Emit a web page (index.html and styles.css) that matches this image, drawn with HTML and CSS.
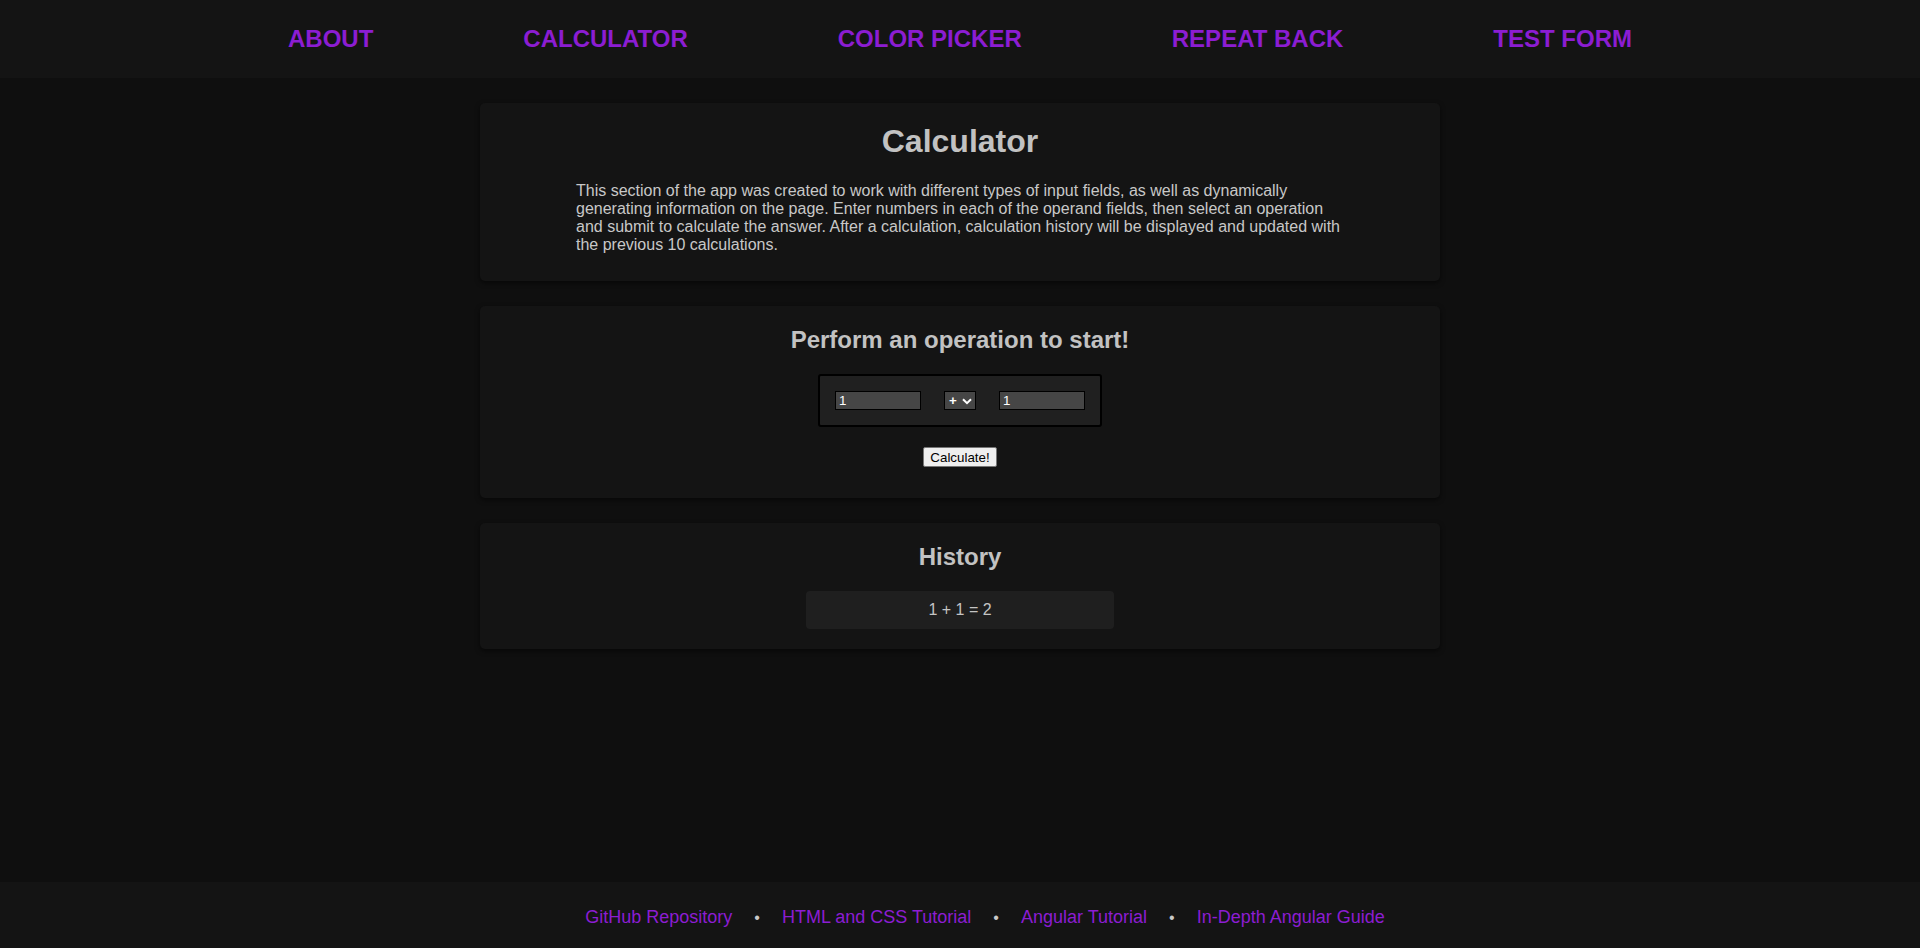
FILE: index.html
```html
<!DOCTYPE html>
<html lang="en">
<head>
<meta charset="utf-8">
<title>Calculator</title>
<link rel="stylesheet" href="styles.css">
</head>
<body>
<header class="site-header">
  <nav class="nav">
    <a class="nav-link" href="#">ABOUT</a>
    <a class="nav-link" href="#">CALCULATOR</a>
    <a class="nav-link" href="#">COLOR PICKER</a>
    <a class="nav-link" href="#">REPEAT BACK</a>
    <a class="nav-link" href="#">TEST FORM</a>
  </nav>
</header>
<main class="main">
  <section class="card card-intro">
    <h1 class="card-title">Calculator</h1>
    <p class="intro-text">This section of the app was created to work with different types of input fields, as well as dynamically generating information on the page. Enter numbers in each of the operand fields, then select an operation and submit to calculate the answer. After a calculation, calculation history will be displayed and updated with the previous 10 calculations.</p>
  </section>
  <section class="card card-form">
    <h2 class="card-subtitle">Perform an operation to start!</h2>
    <div class="operation-box">
      <input class="operand" type="text" value="1">
      <select class="operator">
        <option>+</option>
        <option>-</option>
        <option>*</option>
        <option>/</option>
      </select>
      <input class="operand" type="text" value="1">
    </div>
    <button class="calc-button" type="button">Calculate!</button>
  </section>
  <section class="card card-history">
    <h2 class="card-subtitle">History</h2>
    <div class="history-item">1 + 1 = 2</div>
  </section>
</main>
<footer class="site-footer">
  <a class="footer-link" href="#">GitHub Repository</a>
  <span class="footer-sep">•</span>
  <a class="footer-link" href="#">HTML and CSS Tutorial</a>
  <span class="footer-sep">•</span>
  <a class="footer-link" href="#">Angular Tutorial</a>
  <span class="footer-sep">•</span>
  <a class="footer-link" href="#">In-Depth Angular Guide</a>
</footer>
</body>
</html>
```
FILE: styles.css
```css
* {
  box-sizing: border-box;
}

html, body {
  margin: 0;
  padding: 0;
}

body {
  min-height: 100vh;
  display: flex;
  flex-direction: column;
  background: #0f0f0f;
  font-family: "Liberation Sans", Arial, sans-serif;
  color: #c4c4c4;
}

.site-header {
  height: 78px;
  background: #141414;
  flex: none;
}

.nav {
  width: 70%;
  height: 100%;
  margin: 0 auto;
  display: flex;
  justify-content: space-between;
  align-items: center;
}

.nav-link {
  color: #8c1dd2;
  font-size: 24px;
  line-height: 28px;
  font-weight: bold;
  text-decoration: none;
}

.main {
  flex: 1;
  display: flex;
  flex-direction: column;
  align-items: center;
  gap: 25px;
  padding-top: 25px;
}

.card {
  width: 960px;
  background: #141414;
  border-radius: 5px;
  box-shadow: 0 2px 5px rgba(0, 0, 0, 0.55);
  display: flex;
  flex-direction: column;
  align-items: center;
  padding: 20px 0;
}

.card-intro {
  padding-bottom: 27px;
}

.card-form {
  padding-bottom: 31px;
}

.card-title {
  margin: 0 0 22px;
  font-size: 32px;
  line-height: 37px;
  font-weight: bold;
  color: #c2c2c2;
}

.card-subtitle {
  margin: 0 0 20px;
  font-size: 24px;
  line-height: 28px;
  font-weight: bold;
  color: #c2c2c2;
}

.intro-text {
  width: 768px;
  margin: 0;
  font-size: 16px;
  line-height: 18px;
  color: #c8c8c8;
}

.operation-box {
  display: flex;
  align-items: center;
  gap: 23px;
  padding: 15px;
  background: #202020;
  border: 2px solid #000;
  border-radius: 3px;
}

.operand {
  width: 86px;
  height: 19px;
  margin: 0;
  padding: 0 3px;
  border: 1px solid #000;
  background: #464646;
  color: #fff;
  font-family: "Liberation Sans", Arial, sans-serif;
  font-size: 13.33px;
  outline: none;
}

.operator {
  width: 32px;
  height: 19px;
  margin: 0;
  padding: 0 0 0 4px;
  border: 1px solid #000;
  border-radius: 0;
  background-color: #464646;
  background-image: url("data:image/svg+xml,%3Csvg xmlns='http://www.w3.org/2000/svg' width='10' height='7' viewBox='0 0 10 7'%3E%3Cpath d='M1 1.2 L5 5.2 L9 1.2' fill='none' stroke='%23ffffff' stroke-width='2'/%3E%3C/svg%3E");
  background-repeat: no-repeat;
  background-position: 17px 6px;
  color: #fff;
  font-family: "Liberation Sans", Arial, sans-serif;
  font-size: 13.33px;
  font-weight: bold;
  -webkit-appearance: none;
  appearance: none;
  outline: none;
}

.calc-button {
  margin-top: 20px;
  height: 20px;
  padding: 0 6px;
  background: #efefef;
  border: 1px solid #767676;
  border-radius: 2px;
  color: #000;
  font-family: "Liberation Sans", Arial, sans-serif;
  font-size: 13.33px;
}

.history-item {
  width: 308px;
  height: 38px;
  display: flex;
  align-items: center;
  justify-content: center;
  background: #1f1f1f;
  border-radius: 4px;
  font-size: 16px;
  color: #c4c4c4;
}

.site-footer {
  flex: none;
  height: 66px;
  background: #141414;
  display: flex;
  justify-content: center;
  align-items: center;
  padding-left: 50px;
  padding-top: 4px;
  font-size: 18px;
  line-height: 21px;
}

.footer-link {
  color: #8c1dd2;
  text-decoration: none;
}

.footer-sep {
  margin: 0 22px;
  color: #c8c8c8;
  font-size: 16px;
}
```
